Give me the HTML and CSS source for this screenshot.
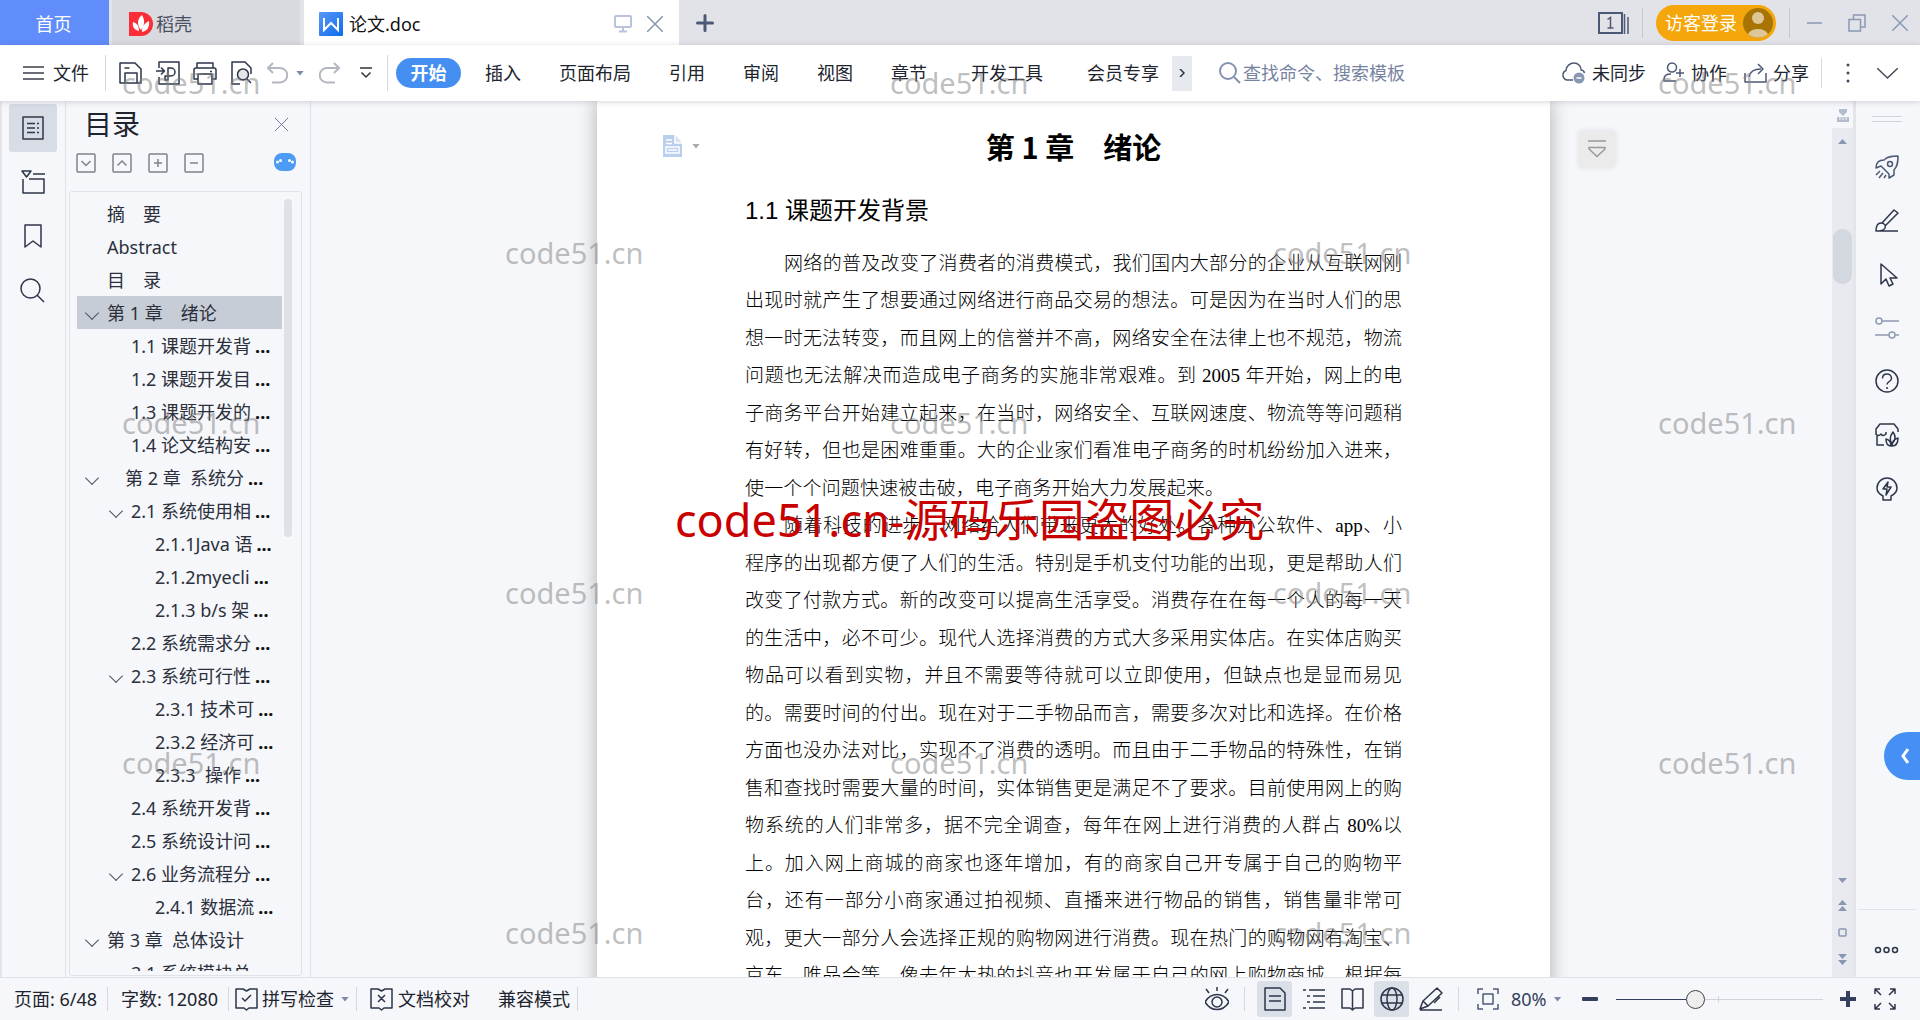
FILE: index.html
```html
<!DOCTYPE html>
<html lang="zh-CN">
<head>
<meta charset="utf-8">
<title>论文.doc</title>
<link rel="stylesheet" href="styles.css">
</head>
<body>
<header class="tabbar">
  <button class="tab tab-home">首页</button>
  <button class="tab tab-docer">
    <svg width="24" height="24" viewBox="0 0 24 24"><path d="M0 0h12a12 12 0 0 1 0 24H0z" fill="#fb2d36"/><path d="M12 18C7 12 9 6 13 3c3 5 3 10-1 15zM10 19c-5-1-7-5-6-9 4 1 6 4 6 9zM13 20c0-6 3-9 7-11 1 6-2 10-7 11z" fill="#fff"/></svg>
    稻壳</button>
  <div class="tab tab-doc">
    <svg width="24" height="24" viewBox="0 0 24 24"><defs><linearGradient id="w" x1="0" y1="0" x2="1" y2="1"><stop offset="0" stop-color="#5a97f8"/><stop offset="1" stop-color="#0d6bec"/></linearGradient></defs><rect width="24" height="24" rx="1" fill="url(#w)"/><path d="M5 6v12l7-7 7 7V6" fill="none" stroke="#fff" stroke-width="2"/></svg>
    <span class="tab-name">论文.doc</span>
    <button class="bare" aria-label="窗口"><svg width="18" height="18" viewBox="0 0 18 18" fill="none" stroke="#b9c3da" stroke-width="2"><rect x="1" y="1" width="16" height="11" rx="1"/><path d="M9 12v4M5 16.500h8"/></svg></button>
    <button class="bare" aria-label="关闭"><svg width="16" height="16" viewBox="0 0 16 16" stroke="#8a97b0" stroke-width="1.500"><path d="M0 0l16 16M16 0L0 16"/></svg></button>
  </div>
  <button class="bare new-tab" aria-label="新建"><svg width="18" height="18" viewBox="0 0 18 18" stroke="#4c5975" stroke-width="3" stroke-linecap="round"><path d="M9 1.500v15M1.500 9h15"/></svg></button>
  <div class="window-tools">
    <button class="bare" aria-label="窗口列表"><svg width="31" height="22" viewBox="0 0 31 22" fill="none" stroke="#4c5975" stroke-width="2"><rect x="1" y="1" width="23" height="20"/><path d="M26.500 2v20M30 5v17" stroke-width="1.500"/><path d="M9.500 7.500l3-2V16M9.500 16h6" stroke-width="1.500"/></svg></button>
    <span class="vline"></span>
    <button class="login">访客登录<svg width="30" height="30" viewBox="0 0 30 30"><circle cx="15" cy="15" r="15" fill="#a87404"/><circle cx="15" cy="10" r="6" fill="#dec697"/><path d="M5 26a11 8.500 0 0 1 20 0 15 15 0 0 1-20 0z" fill="#dec697"/></svg></button>
    <span class="vline"></span>
    <button class="bare minimize" aria-label="最小化"><svg width="15" height="18" viewBox="0 0 15 18" stroke="#8b99b3" stroke-width="1.500"><path d="M0 9h15"/></svg></button>
    <button class="bare restore" aria-label="还原"><svg width="18" height="18" viewBox="0 0 18 18" fill="none" stroke="#8b99b3" stroke-width="1.500"><path d="M1 5.500h11.500V17H1zM5.500 5V1H17v12h-4"/></svg></button>
    <button class="bare" aria-label="关闭窗口"><svg width="16" height="16" viewBox="0 0 16 16" stroke="#8b99b3" stroke-width="1.500"><path d="M0 0l16 16M16 0L0 16"/></svg></button>
  </div>
</header>

<nav class="toolbar">
  <button class="bare file"><svg width="21" height="14" viewBox="0 0 21 14" stroke="#3b3f4a" stroke-width="1.500"><path d="M0 1h21M0 7h21M0 13h21"/></svg>文件</button>
  <span class="vline tall"></span>
  <div class="quick">
    <button class="bare" aria-label="保存"><svg width="24" height="24" viewBox="0 0 24 24" class="ic"><path d="M1 2h15l6 6v14H1zM6 22V12h12v10M5.500 7h5"/></svg></button>
    <button class="bare" aria-label="输出为PDF"><svg width="24" height="24" viewBox="0 0 24 24" class="ic"><path d="M3 7V1h20v22H3v-7M0 10h8M5 6.500L8.500 10 5 13.500M12 15V7h3a4 4 0 0 1 0 8H9v4h3v-7"/></svg></button>
    <button class="bare" aria-label="打印"><svg width="24" height="24" viewBox="0 0 24 24" class="ic"><path d="M4 7V2h16v5M5 18H1V9q0-2 2-2h18q2 0 2 2v9h-4M5 13h14v10H5zM17 10.500h2"/></svg></button>
    <button class="bare" aria-label="打印预览"><svg width="24" height="24" viewBox="0 0 24 24" class="ic"><path d="M10 23H2V1h13l6 6v6M17 18l4 4"/><circle cx="13" cy="13.500" r="5.500" fill="#e4e5e8"/></svg></button>
    <button class="bare" aria-label="撤销"><svg width="21" height="22" viewBox="0 0 21 22" fill="none" stroke="#b3b8c0" stroke-width="2"><path d="M6 1L1 6l5 5M1 6h12a7 7 0 0 1 0 14.500H5"/></svg></button>
    <span class="caret"></span>
    <button class="bare redo" aria-label="恢复"><svg width="21" height="22" viewBox="0 0 21 22" fill="none" stroke="#b3b8c0" stroke-width="2"><path d="M15 1l5 5-5 5M20 6H8a7 7 0 0 0 0 14.500h8"/></svg></button>
    <button class="bare more-quick" aria-label="更多"><svg width="12" height="12" viewBox="0 0 12 12" fill="none" stroke="#30343e" stroke-width="1.500"><path d="M0 1h12M1.500 5.500L6 10l4.500-4.500"/></svg></button>
  </div>
  <span class="vline tall"></span>
  <button class="start">开始</button>
  <div class="menus">
    <button class="bare">插入</button><button class="bare">页面布局</button><button class="bare">引用</button><button class="bare">审阅</button><button class="bare">视图</button><button class="bare">章节</button><button class="bare wide">开发工具</button><button class="bare wide">会员专享</button>
  </div>
  <button class="scroll-menu" aria-label="更多选项卡"><svg width="6" height="8" viewBox="0 0 6 8" fill="none" stroke="#30343e" stroke-width="1.500"><path d="M1 0l4 4-4 4"/></svg></button>
  <label class="search"><svg width="22" height="22" viewBox="0 0 22 22" fill="none" stroke="#8592ad" stroke-width="2"><circle cx="9" cy="9" r="8"/><path d="M15 15l6 6"/></svg><input type="text" placeholder="查找命令、搜索模板" aria-label="查找命令"></label>
  <div class="share-tools">
    <button class="bare"><svg width="25" height="22" viewBox="0 0 25 22" class="ic slate"><path d="M12 18H6a5 5 0 0 1-1-9.500C5 4 9 1 13 1s7 3 7 7c2 0 3 1 3.500 3"/><circle cx="18" cy="16" r="5.500" fill="#8a97b3" stroke="none"/><path d="M15.500 16h5" stroke="#fff"/></svg>未同步</button>
    <button class="bare"><svg width="22" height="22" viewBox="0 0 22 22" class="ic slate"><circle cx="9" cy="5.500" r="4.500"/><path d="M13 19H1v-2c0-4 3-5 7-5M17 7v8M13 11h8"/></svg>协作</button>
    <button class="bare"><svg width="23" height="21" viewBox="0 0 23 21" class="ic slate"><path d="M1 10v9h21v-9M5 14c1-6 5-8 12-8M14 1l5 5-5 5"/></svg>分享</button>
  </div>
  <span class="vline"></span>
  <button class="bare dots" aria-label="更多"><svg width="4" height="20" viewBox="0 0 4 20" fill="#414a5f"><circle cx="2" cy="2" r="1.500"/><circle cx="2" cy="10" r="1.500"/><circle cx="2" cy="18" r="1.500"/></svg></button>
  <button class="bare fold" aria-label="折叠功能区"><svg width="21" height="11" viewBox="0 0 21 11" fill="none" stroke="#4a4f5c" stroke-width="1.500"><path d="M0 0l10.500 10L21 0"/></svg></button>
</nav>

<div class="body">
  <aside class="left-rail">
    <button class="rail-btn on" aria-label="目录"><svg width="22" height="24" viewBox="0 0 22 24" class="ic"><path d="M1 1h20v22H1zM5 7.500h8M5 12h8M5 16.500h8M15 7.500h2M15 12h2M15 16.500h2"/></svg></button>
    <button class="rail-btn" aria-label="章节"><svg width="24" height="24" viewBox="0 0 24 24" class="ic"><path d="M1 1h9L5.500 7zM12 4h12M2 9v14h21V9H8"/></svg></button>
    <button class="rail-btn" aria-label="书签"><svg width="18" height="25" viewBox="0 0 18 25" class="ic"><path d="M1 1h16v22l-8-6-8 6z"/></svg></button>
    <button class="rail-btn" aria-label="查找"><svg width="25" height="25" viewBox="0 0 25 25" class="ic"><circle cx="10.500" cy="10.500" r="9.500"/><path d="M17 17l7 7"/></svg></button>
  </aside>
  <aside class="outline">
    <div class="outline-head"><h2>目录</h2><button class="bare" aria-label="关闭目录"><svg width="13" height="13" viewBox="0 0 13 13" stroke="#6f7c96"><path d="M0 0l13 13M13 0L0 13"/></svg></button></div>
    <div class="outline-tools">
      <button class="bare" aria-label="展开"><svg width="20" height="20" viewBox="0 0 20 20" class="sq"><rect x="1" y="1" width="18" height="18" rx="1"/><path d="M5.500 8l4.500 4.500L14.500 8"/></svg></button>
      <button class="bare" aria-label="收起"><svg width="20" height="20" viewBox="0 0 20 20" class="sq"><rect x="1" y="1" width="18" height="18" rx="1"/><path d="M5.500 12.500L10 8l4.500 4.500"/></svg></button>
      <button class="bare" aria-label="添加"><svg width="20" height="20" viewBox="0 0 20 20" class="sq"><rect x="1" y="1" width="18" height="18" rx="1"/><path d="M6 10h8M10 6v8"/></svg></button>
      <button class="bare" aria-label="减少"><svg width="20" height="20" viewBox="0 0 20 20" class="sq"><rect x="1" y="1" width="18" height="18" rx="1"/><path d="M6 10h8"/></svg></button>
      <button class="bare smart" aria-label="智能识别目录"><svg width="22" height="18" viewBox="0 0 22 18"><rect width="22" height="18" rx="8" fill="#4c9bf5"/><g fill="#fff"><circle cx="3.500" cy="9" r="1.500"/><circle cx="6.500" cy="7.500" r="1.500"/><circle cx="15.500" cy="7.500" r="1.500"/><circle cx="18.500" cy="9" r="1.500"/></g></svg></button>
    </div>
    <div class="tree-box">
      <ul class="tree">
        <li>摘&#8195;要</li>
        <li>Abstract</li>
        <li>目&#8195;录</li>
        <li class="open on">第 1 章&#8195;绪论</li>
        <li class="l2">1.1 课题开发背<b>...</b></li>
        <li class="l2">1.2 课题开发目<b>...</b></li>
        <li class="l2">1.3 课题开发的<b>...</b></li>
        <li class="l2">1.4 论文结构安<b>...</b></li>
        <li class="open">&#8195;第 2 章&nbsp; 系统分<b>...</b></li>
        <li class="l2 open">2.1 系统使用相<b>...</b></li>
        <li class="l3">2.1.1Java 语<b>...</b></li>
        <li class="l3">2.1.2myecli<b>...</b></li>
        <li class="l3">2.1.3 b/s 架<b>...</b></li>
        <li class="l2">2.2 系统需求分<b>...</b></li>
        <li class="l2 open">2.3 系统可行性<b>...</b></li>
        <li class="l3">2.3.1 技术可<b>...</b></li>
        <li class="l3">2.3.2 经济可<b>...</b></li>
        <li class="l3">2.3.3&nbsp; 操作<b>...</b></li>
        <li class="l2">2.4 系统开发背<b>...</b></li>
        <li class="l2">2.5 系统设计问<b>...</b></li>
        <li class="l2 open">2.6 业务流程分<b>...</b></li>
        <li class="l3">2.4.1 数据流<b>...</b></li>
        <li class="open">第 3 章&nbsp; 总体设计</li>
        <li class="l2">3.1 系统模块总</li>
      </ul>
      <div class="tree-scroll"></div>
    </div>
  </aside>

  <main class="workspace">
    <article class="page">
      <button class="bare para-tool" aria-label="段落"><svg width="19" height="22" viewBox="0 0 19 22"><path d="M0 0h12l7 8v14H0z" fill="#b9cfee"/><path d="M12 0v8h7" fill="#d7e3f5" stroke="#fff" stroke-width="1.500"/><path d="M3 5h6M3 8.500h6M3 12h13v6H3zM5 15h9" fill="none" stroke="#fff" stroke-width="1.500"/></svg><span class="caret gray"></span></button>
      <h1>第 1 章&#8195;绪论</h1>
      <h2 class="section">1.1 课题开发背景</h2>
      <div class="text">
        <p class="indent">网络的普及改变了消费者的消费模式，我们国内大部分的企业从互联网刚</p>
        <p>出现时就产生了想要通过网络进行商品交易的想法。可是因为在当时人们的思</p>
        <p>想一时无法转变，而且网上的信誉并不高，网络安全在法律上也不规范，物流</p>
        <p>问题也无法解决而造成电子商务的实施非常艰难。到 2005 年开始，网上的电</p>
        <p>子商务平台开始建立起来，在当时，网络安全、互联网速度、物流等等问题稍</p>
        <p>有好转，但也是困难重重。大的企业家们看准电子商务的时机纷纷加入进来，</p>
        <p class="last">使一个个问题快速被击破，电子商务开始大力发展起来。</p>
        <p class="indent">随着科技的进步，网络给人们带来更大的好处。各种办公软件、app、小</p>
        <p>程序的出现都方便了人们的生活。特别是手机支付功能的出现，更是帮助人们</p>
        <p>改变了付款方式。新的改变可以提高生活享受。消费存在在每一个人的每一天</p>
        <p>的生活中，必不可少。现代人选择消费的方式大多采用实体店。在实体店购买</p>
        <p>物品可以看到实物，并且不需要等待就可以立即使用，但缺点也是显而易见</p>
        <p>的。需要时间的付出。现在对于二手物品而言，需要多次对比和选择。在价格</p>
        <p>方面也没办法对比，实现不了消费的透明。而且由于二手物品的特殊性，在销</p>
        <p>售和查找时需要大量的时间，实体销售更是满足不了要求。目前使用网上的购</p>
        <p>物系统的人们非常多，据不完全调查，每年在网上进行消费的人群占 80%以</p>
        <p>上。加入网上商城的商家也逐年增加，有的商家自己开专属于自己的购物平</p>
        <p>台，还有一部分小商家通过拍视频、直播来进行物品的销售，销售量非常可</p>
        <p>观，更大一部分人会选择正规的购物网进行消费。现在热门的购物网有淘宝、</p>
        <p>京东、唯品会等。像去年大热的抖音也开发属于自己的网上购物商城。根据每</p>
      </div>
    </article>
    <button class="float-tool" aria-label="工具"><svg width="18" height="18" viewBox="0 0 18 18" fill="none" stroke="#999" stroke-width="1.500"><path d="M0 1h18M1 7.500h16v1.500l-8 7.500L1 9z"/></svg></button>
  </main>

  <div class="vscroll">
    <svg class="ruler" width="14" height="14" viewBox="0 0 14 14" fill="#b4bdd0"><path d="M3 0h8v3L7 7 3 3zM1 8h12v5H1z"/><path d="M4 8v3M7 8v3M10 8v3" stroke="#f6f7fa"/></svg>
    <div class="track">
      <i class="up"></i>
      <div class="thumb"></div>
      <div class="jump">
        <svg width="9" height="5" viewBox="0 0 9 5"><path d="M0 0h9L4.500 5z"/></svg>
        <svg width="9" height="11" viewBox="0 0 9 11"><path d="M0 5h9L4.500 0zM0 11h9L4.500 6z"/></svg>
        <svg width="9" height="9" viewBox="0 0 9 9"><rect x="1" y="1" width="7" height="7" rx="1" fill="none" stroke="#8a97b3" stroke-width="1.500"/></svg>
        <svg width="9" height="11" viewBox="0 0 9 11"><path d="M0 0h9L4.500 5zM0 6h9L4.500 11z"/></svg>
      </div>
    </div>
  </div>

  <aside class="right-rail">
    <i class="grip"></i>
    <button class="bare" aria-label="快捷"><svg width="24" height="24" viewBox="0 0 24 24" class="ic slate"><path d="M9 5C13 1 18 1 23 1c0 5 0 10-4 14v5l-5 3v-4l-8-8-5 2c0-5 3-8 8-8zM6 11l8 8M5 16l-4 4M8 18l-4 5M11 20l-2 3"/><circle cx="15" cy="9" r="2.500"/></svg></button>
    <button class="bare" aria-label="样式"><svg width="24" height="24" viewBox="0 0 24 24" class="ic"><path d="M1 22h22M1 22c0-5 1-8 5-8 3 0 5 2 4 5-1 2-4 3-9 3zM7 14L19 1l4 3-13 13"/></svg></button>
    <button class="bare" aria-label="选择"><svg width="24" height="24" viewBox="0 0 24 24" class="ic"><path d="M6 1v20l5-5 3 7 4-2-3-6h7z"/></svg></button>
    <button class="bare" aria-label="属性"><svg width="24" height="22" viewBox="0 0 24 22" class="ic pale"><circle cx="4" cy="4" r="3"/><circle cx="17" cy="18" r="3"/><path d="M7 4h17M0 18h14M20 18h4"/></svg></button>
    <button class="bare" aria-label="帮助"><svg width="24" height="24" viewBox="0 0 24 24" class="ic"><circle cx="12" cy="12" r="11"/><path d="M7.500 9.500C7.500 6 10 5 12 5s4.500 1.500 4.500 4.500c0 3-4.500 3-4.500 6M12 18v2"/></svg></button>
    <button class="bare" aria-label="资源"><svg width="24" height="24" viewBox="0 0 24 24" class="ic"><path d="M23 9V6l-4-5H5L1 6v5q2 3 5 0 2 3 5 0V9M2 13v9h7"/><path d="M17 21c-3-4-2-8 1-12 3 4 3 8-1 12zM16 23c-4 0-5-3-5-7 4 1 5 4 5 7zM17 23c0-4 2-7 6-8 0 5-2 8-6 8z"/></svg></button>
    <button class="bare" aria-label="灵感"><svg width="24" height="24" viewBox="0 0 24 24" class="ic"><path d="M8 23v-4C4 17 2 14 2 11a10 10 0 0 1 20 0c0 3-2 6-6 8v4zM13 5l-5 7h4l-1 6 5-8h-4z"/></svg></button>
    <button class="bare rail-more" aria-label="更多"><svg width="25" height="8" viewBox="0 0 25 8" class="ic"><circle cx="4" cy="4" r="2.500"/><circle cx="12.500" cy="4" r="2.500"/><circle cx="21" cy="4" r="2.500"/></svg></button>
  </aside>
  <button class="drawer" aria-label="展开侧栏"><svg width="8" height="16" viewBox="0 0 8 16" fill="none" stroke="#fff" stroke-width="3"><path d="M7 1L2 8l5 7"/></svg></button>
</div>

<footer class="status">
  <span class="st-page">页面: 6/48</span><span class="vline"></span>
  <span class="st-words">字数: 12080</span><span class="vline"></span>
  <button class="bare st-spell"><svg width="23" height="24" viewBox="0 0 23 24" class="ic"><path d="M8 2H1v19h8l2.500 2 2.500-2h8V2h-7l-3.500 2zM7 11l3 3 6-6"/></svg>拼写检查<span class="caret"></span></button><span class="vline"></span>
  <button class="bare st-proof"><svg width="23" height="24" viewBox="0 0 23 24" class="ic"><path d="M8 2H1v19h8l2.500 2 2.500-2h8V2h-7l-3.500 2zM8 8l7 7M15 8l-7 7"/></svg>文档校对</button>
  <span class="st-mode">兼容模式</span><span class="vline"></span>
  <div class="views">
    <button class="view" aria-label="护眼模式"><svg width="24" height="24" viewBox="0 0 24 24" class="ic"><path d="M0 15c6-10 18-10 24 0-6 10-18 10-24 0zM12 0v4M1 2l3 4M23 2l-3 4"/><circle cx="12" cy="15" r="5"/></svg></button>
    <span class="vline"></span>
    <button class="view on" aria-label="页面视图"><svg width="22" height="24" viewBox="0 0 22 24" class="ic"><path d="M1 1h15l5 5v17H1zM5 9h12M5 14h12"/></svg></button>
    <button class="view" aria-label="大纲"><svg width="22" height="20" viewBox="0 0 22 20" class="ic"><path d="M0 1h3M6 1h16M4 7h3M10 7h12M4 13h3M10 13h12M0 19h3M6 19h16"/></svg></button>
    <button class="view" aria-label="阅读版式"><svg width="23" height="23" viewBox="0 0 23 23" class="ic"><path d="M1 1h8l2.500 2L14 1h8v19h-8l-2.500 2L9 20H1zM11.500 3v19"/></svg></button>
    <button class="view on" aria-label="Web版式"><svg width="24" height="24" viewBox="0 0 24 24" class="ic"><circle cx="12" cy="12" r="11"/><ellipse cx="12" cy="12" rx="5" ry="11"/><path d="M2 8h20M2 16h20"/></svg></button>
    <button class="view" aria-label="书写"><svg width="24" height="24" viewBox="0 0 24 24" class="ic"><path d="M1 23h22M1 22l3-8L18 1l5 5-14 13zM4 14l5 5M21 10l-6 6"/></svg></button>
    <span class="vline"></span>
    <button class="bare fit" aria-label="适合页面"><svg width="22" height="22" viewBox="0 0 22 22" class="ic slate"><path d="M6 1H1v5M16 1h5v5M6 21H1v-5M16 21h5v-5M6 6h10v10H6z"/></svg></button>
    <button class="bare percent">80%<span class="caret"></span></button>
    <button class="bare minus" aria-label="缩小"><svg width="16" height="4" viewBox="0 0 16 4"><rect width="16" height="4" rx="1" fill="#35415c"/></svg></button>
    <input class="zoom" type="range" min="0" max="100" value="37" aria-label="缩放">
    <button class="bare plus" aria-label="放大"><svg width="16" height="16" viewBox="0 0 16 16" fill="#35415c"><path d="M6 0h4v6h6v4h-6v6H6v-6H0V6h6z"/></svg></button>
    <button class="bare full" aria-label="全屏"><svg width="22" height="22" viewBox="0 0 22 22" class="ic"><path d="M1 6V1h5M1 1l6 6M16 1h5v5M21 1l-6 6M1 16v5h5M1 21l6-6M21 16v5h-5M21 21l-6-6"/></svg></button>
  </div>
</footer>

<div class="marks" aria-hidden="true">
  <div class="mark-row"><span>code51.cn</span><span>code51.cn</span><span>code51.cn</span></div>
  <div class="mark-row even"><span>code51.cn</span><span>code51.cn</span></div>
  <div class="mark-row"><span>code51.cn</span><span>code51.cn</span><span>code51.cn</span></div>
  <div class="mark-row even"><span>code51.cn</span><span>code51.cn</span></div>
  <div class="mark-row"><span>code51.cn</span><span>code51.cn</span><span>code51.cn</span></div>
  <div class="mark-row even"><span>code51.cn</span><span>code51.cn</span></div>
</div>
<div class="notice">code51.cn-源码乐园盗图必究</div>
</body>
</html>
```
FILE: styles.css
```css
* { box-sizing: border-box; }
body {
  margin: 0;
  height: 100vh;
  display: flex;
  flex-direction: column;
  overflow: hidden;
  position: relative;
  background: #f6f7fa;
  color: #20242e;
  font: 18px/24px "Noto Sans", "Noto Sans CJK SC", sans-serif;
  text-spacing-trim: space-all;
  text-autospace: no-autospace;
}
button, input { font: inherit; color: inherit; }
button { cursor: pointer; }
svg { flex: none; display: block; }
.bare {
  display: flex; align-items: center; flex: none;
  padding: 0; border: 0; background: none; white-space: nowrap;
}
.ic { fill: none; stroke: #2d364a; stroke-width: 1.5; stroke-linejoin: round; }
.slate { stroke: #4c5975; }
.pale { stroke: #8e9ab2; }
.sq { fill: none; stroke: #808389; stroke-width: 1.5; }
.vline { width: 1px; height: 30px; flex: none; background: #d5d8de; }
.vline.tall { height: 36px; }
.caret {
  width: 8px; height: 5px; flex: none;
  background: #7c8aa6; clip-path: polygon(0 0, 100% 0, 50% 100%);
}
.caret.gray { background: #a9a9a9; }

/* tabs */
.tabbar { height: 45px; flex: none; display: flex; align-items: center; background: #e2e3e8; }
.tab { height: 45px; border: 0; display: flex; align-items: center; flex: none; padding: 3px 0 0; }
.tab-home { width: 109px; justify-content: center; padding-right: 2px; background: #618dfb; color: #fff; }
.tab-docer { width: 188px; margin: 0 4px 0 3px; padding-left: 17px; gap: 3px; background: #d8dadf; color: #4a5061; }
.tab-doc { width: 375px; padding-left: 15px; padding-right: 16px; gap: 6px; background: #fff; color: #111; }
.tab-name { flex: 1; }
.tab-doc .bare + .bare { margin-left: 9px; }
.new-tab { margin-left: 17px; }
.window-tools { margin-left: auto; margin-right: 12px; display: flex; align-items: center; }
.window-tools .vline { margin: 0 13px; background: #c6c9d1; }
.login {
  width: 120px; height: 36px; border: 0; border-radius: 18px; padding: 0 3px 0 9px;
  display: flex; align-items: center; justify-content: space-between;
  background: #f5a60b; color: #fff; white-space: nowrap;
}
.minimize { margin-left: 4px; }
.restore { margin: 0 26px; }

/* toolbar */
.toolbar {
  height: 56px; flex: none; display: flex; align-items: center; padding-left: 23px;
  background: #fff; box-shadow: 0 1px 6px rgba(0, 0, 0, .16); position: relative; z-index: 2;
}
.file { gap: 9px; margin-right: 16px; }
.quick { display: flex; align-items: center; margin: 0 13px; width: 255px; }
.quick .bare { margin-right: 13px; }
.quick .caret { margin-left: -5px; }
.quick .redo { margin-left: 15px; margin-right: 20px; }
.quick .more-quick { margin-right: 0; }
.start {
  width: 65px; height: 30px; border: 0; border-radius: 15px; margin-left: 8px; padding: 0;
  background: #468ff2; color: #fff; font-weight: 700;
}
.menus { display: flex; gap: 38px; margin-left: 24px; }
.menus .wide { margin-left: 6px; }
.scroll-menu {
  width: 20px; height: 35px; border: 0; padding: 0; margin-left: 13px;
  background: #e6e9ee; display: flex; align-items: center; justify-content: center;
}
.search { display: flex; align-items: center; gap: 2px; margin-left: 27px; color: #7684a0; }
.search input { width: 200px; border: 0; padding: 0; background: none; outline: 0; }
.search input::placeholder { color: #7684a0; opacity: 1; }
.share-tools { display: flex; gap: 17px; margin-left: auto; margin-right: 12px; }
.share-tools .bare { gap: 6px; }
.dots { margin-left: 24px; }
.fold { margin: 0 22px 0 27px; }

/* body */
.body { flex: 1; min-height: 0; display: flex; position: relative; }
.left-rail {
  width: 66px; flex: none; border-left: 2px solid #e3e5ea; border-right: 1px solid #dfe2e7;
  display: flex; flex-direction: column; align-items: center; gap: 6px; padding: 3px 2px 0 0;
}
.rail-btn {
  width: 48px; height: 48px; border: 0; border-radius: 3px; padding: 0; background: none;
  display: flex; align-items: center; justify-content: center;
}
.rail-btn.on { background: #d8dde5; }
.outline {
  width: 245px; flex: none; border-right: 1px solid #dfe2e7; padding: 0 8px 0 3px;
  display: flex; flex-direction: column;
}
.outline-head { display: flex; align-items: center; padding: 2px 14px 0 15px; height: 44px; }
.outline-head h2 { flex: 1; margin: 0; font-size: 28px; line-height: 40px; font-weight: 400; }
.outline-tools { display: flex; gap: 16px; padding: 8px 6px 0 7px; height: 46px; align-items: flex-start; }
.smart { margin-left: auto; }
.tree-box {
  flex: 1; min-height: 0; border: 1px solid #dfe2e7; border-radius: 3px; overflow: hidden;
  padding: 5px 0 4px 7px; display: flex; gap: 2px; margin-bottom: 1px;
}
.tree { list-style: none; margin: 0; padding: 0; flex: 1; overflow: hidden; color: #2b303c; }
.tree li { height: 33px; line-height: 35px; padding-left: 30px; white-space: nowrap; position: relative; }
.tree .l2 { padding-left: 54px; }
.tree .l3 { padding-left: 78px; }
.tree .on { background: #c6cdd6; }
.tree b { color: #111; margin-left: 4px; }
.tree .open::before {
  content: ""; position: absolute; left: 10px; top: 12px; width: 9px; height: 9px;
  border: solid #4c5364; border-width: 0 1px 1px 0; transform: rotate(45deg);
}
.tree .l2.open::before { left: 34px; }
.tree-scroll { width: 8px; height: 338px; margin: 2px 9px 0 0; border-radius: 4px; background: #dee1e6; }

.workspace { flex: 1; min-width: 0; overflow: hidden; position: relative; padding-left: 4px; }
.page {
  width: 953px; margin: 0 auto; padding: 25px 148px 0; min-height: 100%; position: relative;
  background: #fff; box-shadow: 0 0 18px rgba(0, 0, 0, .3); color: #000;
}
.para-tool { position: absolute; left: 66px; top: 34px; gap: 10px; }
.page h1 { margin: 0; font: 700 29px/40px "Noto Sans CJK SC", sans-serif; text-align: center; }
.section { margin: 27px 0 16px; font: 400 24px/36px "Liberation Sans", "Noto Sans CJK SC", sans-serif; }
.text { font: 300 19px/37px "Liberation Serif", "Noto Sans CJK SC", serif; }
.text p { margin: 0; white-space: nowrap; text-align: justify; text-align-last: justify; }
.text p:nth-child(even) { line-height: 38px; }
.text .indent { padding-left: 39px; }
.text .last { margin-right: 178px; }
.float-tool {
  position: absolute; right: 217px; top: 30px; width: 36px; height: 36px; border: 0; border-radius: 3px;
  padding: 0; display: flex; align-items: center; justify-content: center;
  background: #ebebeb; box-shadow: 0 0 4px 2px rgba(0, 0, 0, .06);
}

.vscroll { width: 24px; flex: none; border-right: 3px solid #e3e5ea; display: flex; flex-direction: column; }
.ruler { margin: 8px 0 5px 4px; }
.track { flex: 1; background: #e8eaef; display: flex; flex-direction: column; align-items: center; padding: 11px 0 12px; }
.up { width: 9px; height: 5px; background: #8a97b3; clip-path: polygon(50% 0, 100% 100%, 0 100%); }
.thumb { width: 19px; height: 55px; border-radius: 9px; margin-top: 85px; background: #d3d7e0; }
.jump { margin-top: auto; display: flex; flex-direction: column; gap: 17px; fill: #8a97b3; }

.right-rail { width: 64px; flex: none; display: flex; flex-direction: column; align-items: center; gap: 30px; padding: 15px 3px 0 0; }
.grip { width: 30px; height: 6px; border: solid #cfd2d6; border-width: 1px 0; margin-bottom: 3px; }
.rail-more {
  margin-top: auto; width: 58px; height: 68px; padding-top: 13px; justify-content: center;
  border-top: 1px solid #dfe2e7;
}
.drawer {
  position: absolute; right: 0; top: 631px; width: 36px; height: 48px; border: 0; padding: 0 11px 0 0;
  border-radius: 24px 0 0 24px; background: #468ff5;
  display: flex; align-items: center; justify-content: flex-end;
}

/* status bar */
.status {
  height: 43px; flex: none; display: flex; align-items: center; padding-left: 14px;
  border-top: 1px solid #dfe2e7; background: #f6f7fa; white-space: nowrap; position: relative;
}
.status .vline { height: 24px; }
.st-page { width: 93px; }
.st-words { width: 107px; margin-left: 13px; }
.st-spell { margin-left: 6px; gap: 4px; width: 121px; }
.st-spell .caret { margin-left: 3px; }
.st-proof { margin-left: 13px; gap: 5px; }
.st-mode { margin: 0 7px 0 28px; }
.views { margin-left: auto; margin-right: 24px; display: flex; align-items: center; }
.view {
  width: 35px; height: 36px; border: 0; border-radius: 3px; padding: 0; margin-right: 4px; background: none;
  display: flex; align-items: center; justify-content: center;
}
.view.on { background: #dbdfe7; }
.views .vline { margin: 0 12px 0 6px; }
.fit { margin: 0 12px 0 6px; }
.percent { gap: 7px; width: 53px; color: #35415c; }
.minus { margin: 0 18px; }
.zoom {
  appearance: none; width: 207px; height: 24px; margin: 0 17px 0 0;
  background:
    linear-gradient(#35415c, #35415c) left center / 70px 1px no-repeat,
    linear-gradient(#cfd3da, #cfd3da) 102px center / 1px 6px no-repeat,
    linear-gradient(#cfd3da, #cfd3da) center / 100% 1px no-repeat;
}
.zoom::-webkit-slider-thumb {
  appearance: none; width: 19px; height: 19px; border: 1px solid #444; border-radius: 50%; background: #eee;
}
.full { margin-left: 18px; }

/* overlays */
.marks {
  position: absolute; inset: 63px 0 auto 122px; z-index: 5; pointer-events: none;
  color: rgba(128, 128, 128, .5); font: 400 29px/40px "Noto Sans", sans-serif;
  display: flex; flex-direction: column; gap: 130px;
}
.mark-row { display: flex; }
.mark-row.even { padding-left: 383px; }
.mark-row span { width: 768px; flex: none; }
.mark-row span:last-child { width: auto; }
.notice {
  position: absolute; left: 675px; top: 490px; z-index: 6; pointer-events: none;
  color: #c90000; font-size: 45px; line-height: 60px; white-space: nowrap;
}
```
